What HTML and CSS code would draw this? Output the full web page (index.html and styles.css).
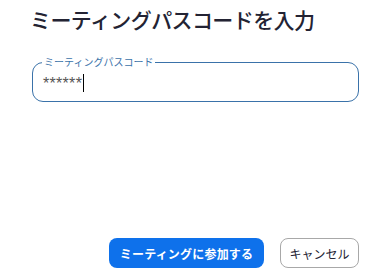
FILE: index.html
```html
<!DOCTYPE html>
<html lang="ja">
<head>
<meta charset="utf-8">
<link rel="stylesheet" href="styles.css">
</head>
<body>
<div class="dialog">
  <h1 class="title">ミーティングパスコードを入力</h1>
  <fieldset class="field">
    <legend class="field-label">ミーティングパスコード</legend>
    <div class="field-value">******<span class="caret"></span></div>
  </fieldset>
  <div class="actions">
    <button class="btn btn-primary">ミーティングに参加する</button>
    <button class="btn btn-secondary">キャンセル</button>
  </div>
</div>
</body>
</html>
```

FILE: styles.css
```css
html, body {
  margin: 0;
  padding: 0;
  background: #ffffff;
}
body {
  font-family: "Noto Sans CJK JP", "Noto Sans", sans-serif;
  color: #232333;
}
.dialog {
  box-sizing: border-box;
  height: 280px;
  padding: 4px 31px 12px 31px;
  display: flex;
  flex-direction: column;
}
.title {
  margin: 0 0 0 -1px;
  font-size: 21px;
  line-height: 30px;
  font-weight: 500;
  letter-spacing: -0.6px;
  color: #232333;
  white-space: nowrap;
}
.field {
  margin: 22px 0 0 1px;
  padding: 0 9px 9px 9px;
  border: 1px solid #3a72a9;
  border-radius: 11px;
}
.field-label {
  padding: 0 2px;
  font-size: 10px;
  line-height: 12px;
  color: #3a72a9;
}
.field-value {
  display: flex;
  align-items: flex-start;
  padding-top: 6px;
  padding-left: 1px;
  height: 18px;
  font-family: "Liberation Sans", sans-serif;
  font-size: 16px;
  line-height: 20px;
  color: #555555;
  letter-spacing: 0.3px;
}
.caret {
  display: inline-block;
  width: 1px;
  height: 18px;
  margin-left: 1px;
  background: #000000;
}
.actions {
  margin-top: auto;
  display: flex;
  justify-content: flex-end;
  gap: 16px;
}
.btn {
  box-sizing: border-box;
  height: 30px;
  border-radius: 8px;
  font-family: "Noto Sans CJK JP", "Noto Sans", sans-serif;
  font-size: 12px;
  cursor: pointer;
}
.btn-primary {
  width: 155px;
  background: #0e71eb;
  color: #ffffff;
  border: none;
  font-weight: 700;
  letter-spacing: 0.2px;
}
.btn-secondary {
  width: 79px;
  background: #ffffff;
  color: #232333;
  border: 1px solid #a8a8a8;
}
```
